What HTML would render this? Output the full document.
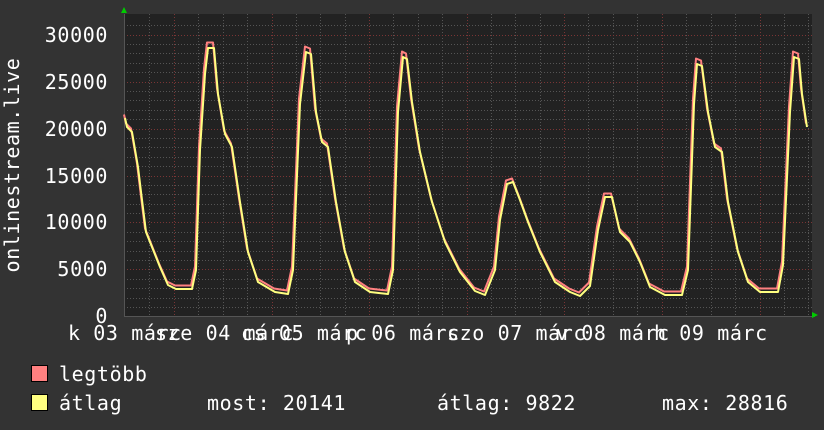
<!DOCTYPE html>
<html><head><meta charset="utf-8"><style>
html,body{margin:0;padding:0;background:#333;}
svg{display:block}
text{font-family:"DejaVu Sans Mono","Liberation Mono",monospace;font-size:20px;fill:#fff;letter-spacing:0.6px}
</style></head><body>
<svg width="824" height="430" viewBox="0 0 824 430" xmlns="http://www.w3.org/2000/svg">
<rect width="824" height="430" fill="#333"/>
<rect x="124" y="14" width="688" height="302" fill="#222"/>
<g stroke="#555" stroke-width="1" stroke-dasharray="1,2">
<path d="M124 25.5H812M124 44.5H812M124 53.5H812M124 63.5H812M124 72.5H812M124 91.5H812M124 100.5H812M124 110.5H812M124 119.5H812M124 138.5H812M124 147.5H812M124 157.5H812M124 166.5H812M124 185.5H812M124 194.5H812M124 204.5H812M124 213.5H812M124 232.5H812M124 241.5H812M124 251.5H812M124 260.5H812M124 279.5H812M124 288.5H812M124 298.5H812M124 307.5H812"/>
<path d="M149.5 14V316M198.5 14V316M223.5 14V316M247.5 14V316M296.5 14V316M320.5 14V316M345.5 14V316M393.5 14V316M418.5 14V316M442.5 14V316M491.5 14V316M515.5 14V316M540.5 14V316M588.5 14V316M613.5 14V316M637.5 14V316M686.5 14V316M711.5 14V316M735.5 14V316M784.5 14V316M808.5 14V316"/>
</g>
<g stroke="#7a3535" stroke-width="1" stroke-dasharray="1,2">
<path d="M124 35.5H812M124 82.5H812M124 129.5H812M124 176.5H812M124 222.5H812M124 269.5H812"/>
<path d="M174.5 14V316M272.5 14V316M369.5 14V316M467.5 14V316M564.5 14V316M662.5 14V316M760.5 14V316"/>
</g>
<path d="M124 316.5H815M124.5 14V316" stroke="#555" stroke-width="1"/>
<polygon points="121,13 127,13 124,7" fill="#0c0"/>
<polygon points="812,312 812,318 818,315" fill="#0c0"/>
<g fill="none" stroke-width="2" stroke-linejoin="round">
<polyline stroke="#ff8080" transform="translate(-1,-1.5)" points="125,116 127,125 132,130 138,165 142,198 146,230 152,245 160,265 168,283 176,287 192,287 196,268 200,148 205,70 208,44 214,44 218,90 225,132 232,145 240,200 248,250 258,280 275,290 288,292 293,268 300,100 306,48 311,50 316,110 322,140 328,145 336,200 345,250 355,280 370,290 388,292 393,268 398,108 403,53 407,55 412,100 420,150 432,200 445,240 460,270 475,289 485,293 495,268 500,218 507,182 513,180 520,198 528,220 540,250 555,280 570,290 580,294 590,284 598,228 605,195 612,195 620,230 630,240 640,260 650,285 665,293 682,293 688,268 694,100 697,60 702,62 708,110 715,145 722,150 728,200 738,250 748,280 760,290 778,290 783,263 790,108 794,53 799,55 802,90 807,125"/>
<polyline stroke="#ffff80" points="125,118 127,127 132,132 138,167 142,200 146,232 152,247 160,267 168,285 176,289 192,289 196,270 200,150 205,74 208,48 214,48 218,94 225,134 232,147 240,202 248,252 258,282 275,292 288,294 293,270 300,104 306,52 311,54 316,112 322,142 328,147 336,202 345,252 355,282 370,292 388,294 393,270 398,112 403,57 407,59 412,102 420,152 432,202 445,242 460,272 475,291 485,295 495,270 500,220 507,184 513,182 520,200 528,222 540,252 555,282 570,292 580,296 590,286 598,230 605,197 612,197 620,232 630,242 640,262 650,287 665,295 682,295 688,270 694,104 697,64 702,66 708,112 715,147 722,152 728,202 738,252 748,282 760,292 778,292 783,265 790,112 794,57 799,59 802,94 807,127"/>
</g>
<g text-anchor="end">
<text x="108" y="42">30000</text>
<text x="108" y="89">25000</text>
<text x="108" y="136">20000</text>
<text x="108" y="183">15000</text>
<text x="108" y="229">10000</text>
<text x="108" y="276">5000</text>
<text x="108" y="323">0</text>
</g>
<text transform="translate(19,165) rotate(-90)" text-anchor="middle">onlinestream.live</text>
<g>
<text x="68" y="340">k 03 márc</text>
<text x="155" y="340">sze 04 márc</text>
<text x="241" y="340">cs 05 márc</text>
<text x="346" y="340">p 06 márc</text>
<text x="447" y="340">szo 07 márc</text>
<text x="556" y="340">v 08 márc</text>
<text x="654" y="340">h 09 márc</text>
</g>
<rect x="31.5" y="365.5" width="16" height="16" fill="#ff8080" stroke="#000"/>
<rect x="31.5" y="394.5" width="16" height="16" fill="#ffff80" stroke="#000"/>
<text x="59" y="381">legtöbb</text>
<text x="59" y="410">átlag</text>
<text x="207" y="410">most: 20141</text>
<text x="437" y="410">átlag: 9822</text>
<text x="662" y="410">max: 28816</text>
</svg>
</body></html>
